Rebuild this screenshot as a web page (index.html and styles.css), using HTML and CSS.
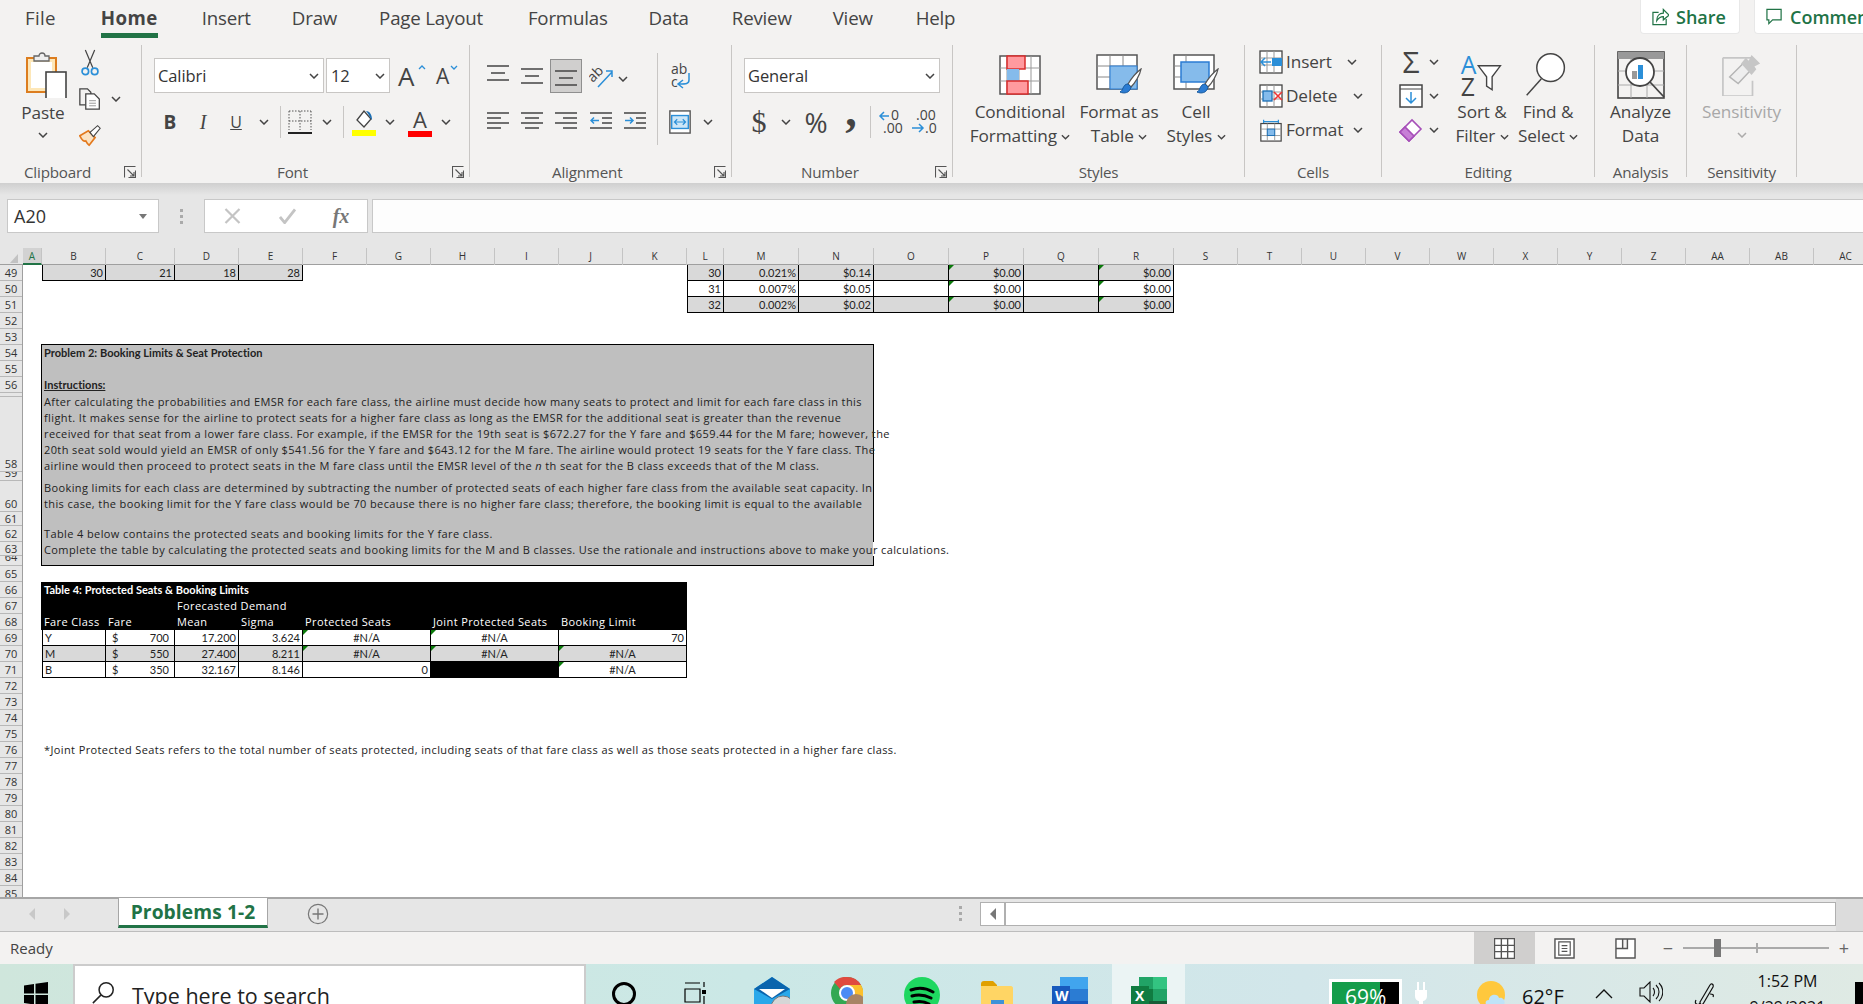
FILE: index.html
```html
<!DOCTYPE html>
<html lang="en">
<head>
<meta charset="utf-8">
<title>Problems 1-2 - Excel</title>
<link rel="stylesheet" href="styles.css">
</head>
<body>
<svg class="defs" width="0" height="0" aria-hidden="true">
  <symbol id="chev" viewBox="0 0 10 6"><path d="M1 1l4 4 4-4" fill="none" stroke="#444" stroke-width="1.5"/></symbol>
  <symbol id="launch" viewBox="0 0 12 12"><path d="M.5 11.500V.5h11M11.500 4.500v7h-7M3.500 3.500l6.500 6.500M10 6v4H6" fill="none" stroke="#555" stroke-width="1.100"/></symbol>
  <symbol id="brush" viewBox="0 0 22 26"><path d="M21 1C17 4 11 11 8 16l3 3C15 15 20 7 21 1z" fill="#fff" stroke="#555" stroke-width="1.300"/><path d="M8 16c-3 0-4 2-5 4-.6 2-1.500 3-3 4 4 2 10 1 11-5z" fill="#2b7cd3" stroke="#185a9d"/></symbol>
</svg>
<div class="app">
  <header class="ribbon">
    <div class="tabline">
      <nav class="tabs">
        <span class="tab">File</span>
        <span class="tab tab-on">Home</span>
        <span class="tab">Insert</span>
        <span class="tab">Draw</span>
        <span class="tab">Page Layout</span>
        <span class="tab">Formulas</span>
        <span class="tab">Data</span>
        <span class="tab">Review</span>
        <span class="tab">View</span>
        <span class="tab">Help</span>
      </nav>
      <div class="collab">
        <span class="collab-btn share-btn">
          <svg class="collab-ico" viewBox="0 0 18 20"><path d="M7 5H1v13h14v-6M5 14c0-5 3-8 7-8V2l6 6-6 5V9.500c-3 0-5 1-7 4.500z" fill="none" stroke="#217346" stroke-width="1.300"/></svg>Share</span>
        <span class="collab-btn comment-btn">
          <svg class="collab-ico" viewBox="0 0 18 20"><path d="M1 2h15v11H7l-4 4v-4H1z" fill="none" stroke="#217346" stroke-width="1.300"/></svg>Comments</span>
      </div>
    </div>
    <div class="groups">
      <section class="group g-clip">
        <div class="clip-body">
          <div class="paste">
            <svg class="paste-ico" viewBox="0 0 41 46"><rect x="1" y="6" width="29" height="34" fill="#fde7b8" stroke="#dc7d1f" stroke-width="2"/><rect x="5" y="10" width="21" height="26" fill="#fff"/><path d="M8 9V4h5c0-4 6-4 6 0h4v5z" fill="#eee" stroke="#666" stroke-width="1.300"/><rect x="20" y="20" width="20" height="31" fill="#fff" stroke="#444" stroke-width="1.600"/></svg>
            <span class="big-text">Paste</span>
            <svg class="chev"><use href="#chev"/></svg>
          </div>
          <svg class="clip-ico" viewBox="0 0 20 30"><path d="M5 1l8 19M15 1L7 20" stroke="#444" fill="none" stroke-width="1.300"/><circle cx="5" cy="24" r="3.500" fill="none" stroke="#2b8fd8" stroke-width="1.800"/><circle cx="15" cy="24" r="3.500" fill="none" stroke="#2b8fd8" stroke-width="1.800"/></svg>
          <span></span>
          <svg class="clip-ico" viewBox="0 0 26 26"><path d="M8 20H1V1h9l4 4v3" fill="none" stroke="#444" stroke-width="1.500"/><path d="M8 7h10l6 6v12H8z" fill="#fff" stroke="#444" stroke-width="1.500"/><path d="M12 15h8M12 18h8M12 21h8" stroke="#888"/></svg>
          <svg class="chev"><use href="#chev"/></svg>
          <svg class="clip-ico" viewBox="0 0 26 26"><path d="M1 14l10-6 8 8-7 9c-2-1-3-3-4-5-2 1-4 0-7-6z" fill="#fbe3c4" stroke="#e3791d" stroke-width="2"/><path d="M13 10l9-8 3 3-8 10z" fill="#fff" stroke="#444" stroke-width="1.300"/></svg>
          <span></span>
        </div>
        <div class="group-label lb-clip"><span>Clipboard</span><svg class="launch"><use href="#launch"/></svg></div>
      </section>

      <section class="group g-font">
        <div class="stack">
          <div class="font-row1">
            <div class="combo combo-font"><span>Calibri</span><svg class="chev"><use href="#chev"/></svg></div>
            <div class="combo combo-size"><span>12</span><svg class="chev"><use href="#chev"/></svg></div>
            <span class="grow-a big-a">A<svg class="caret" viewBox="0 0 8 5"><path d="M1 4l3-3 3 3" fill="none" stroke="#2b8fd8" stroke-width="1.300"/></svg></span>
            <span class="grow-a small-a">A<svg class="caret" viewBox="0 0 8 5"><path d="M1 1l3 3 3-3" fill="none" stroke="#2b8fd8" stroke-width="1.300"/></svg></span>
          </div>
          <div class="font-row2">
            <b class="fmt">B</b>
            <i class="fmt fmt-i">I</i>
            <u class="fmt fmt-u">U</u>
            <svg class="chev"><use href="#chev"/></svg>
            <span class="vsep"></span>
            <svg class="ico24" viewBox="0 0 24 24"><path d="M1 1h22M1 1v19M23 1v19M12 1v19M1 11h22" stroke="#555" stroke-dasharray="1.500 1.500" fill="none"/><path d="M0 23h24" stroke="#222" stroke-width="2"/></svg>
            <svg class="chev"><use href="#chev"/></svg>
            <span class="vsep"></span>
            <svg class="ico-col" viewBox="0 0 24 28"><path d="M5 12l7-9 7 8-7 8z" fill="#fff" stroke="#444" stroke-width="1.300"/><path d="M14 3c4 0 6 4 6 9-2-2-3-6-6-9z" fill="#1b6fb5"/><rect y="22" width="24" height="6" fill="#ff0"/></svg>
            <svg class="chev"><use href="#chev"/></svg>
            <span class="font-col">A</span>
            <svg class="chev"><use href="#chev"/></svg>
          </div>
        </div>
        <div class="group-label lb-font"><span>Font</span><svg class="launch"><use href="#launch"/></svg></div>
      </section>

      <section class="group g-align">
        <div class="align-body">
          <svg class="lines" viewBox="0 0 22 22"><path d="M0 1h22M4 8h14M0 15h22" stroke="#444" stroke-width="1.500"/></svg>
          <svg class="lines" viewBox="0 0 22 22"><path d="M0 4h22M4 11h14M0 18h22" stroke="#444" stroke-width="1.500"/></svg>
          <span class="align-on"><svg class="lines" viewBox="0 0 22 22"><path d="M0 6h22M4 13h14M0 20h22" stroke="#444" stroke-width="1.500"/></svg></span>
          <svg class="ico24" viewBox="0 0 24 24"><text x="0" y="14" class="svg-t" transform="rotate(-45 8 12)">ab</text><path d="M9 23L23 8M17 7h6v6" stroke="#2b8fd8" stroke-width="1.500" fill="none"/></svg>
          <svg class="chev chev-start"><use href="#chev"/></svg>
          <span class="vsep vsep-tall"></span>
          <svg class="ico24 wrap-ico" viewBox="0 0 24 28"><text x="3" y="12" class="svg-t">ab</text><text x="3" y="25" class="svg-t">c</text><path d="M21 11v7c0 4-3 4-10 4M15 18l-5 4 5 4" stroke="#2b8fd8" stroke-width="1.500" fill="none"/></svg>
          <span></span>
          <svg class="lines" viewBox="0 0 22 22"><path d="M0 2h22M0 7h14M0 12h22M0 17h14" stroke="#444" stroke-width="1.500"/></svg>
          <svg class="lines" viewBox="0 0 22 22"><path d="M0 2h22M4 7h14M0 12h22M4 17h14" stroke="#444" stroke-width="1.500"/></svg>
          <svg class="lines" viewBox="0 0 22 22"><path d="M0 2h22M8 7h14M0 12h22M8 17h14" stroke="#444" stroke-width="1.500"/></svg>
          <svg class="lines" viewBox="0 0 22 22"><path d="M0 2h22M12 7h10M12 12h10M0 17h22" stroke="#444" stroke-width="1.500"/><path d="M9 9.500H1M4 6.500l-3 3 3 3" stroke="#2b8fd8" stroke-width="1.500" fill="none"/></svg>
          <svg class="lines" viewBox="0 0 22 22"><path d="M0 2h22M12 7h10M12 12h10M0 17h22" stroke="#444" stroke-width="1.500"/><path d="M1 9.500h8M6 6.500l3 3-3 3" stroke="#2b8fd8" stroke-width="1.500" fill="none"/></svg>
          <svg class="ico24" viewBox="0 0 24 26"><rect x="1" y="1" width="22" height="24" fill="#fff" stroke="#555" stroke-width="1.500"/><rect x="3" y="6" width="18" height="14" fill="#cde6f7" stroke="#2b8fd8" stroke-width="1.500"/><path d="M6 13h12M9 10l-3 3 3 3M15 10l3 3-3 3" stroke="#2b8fd8" stroke-width="1.300" fill="none"/></svg>
          <svg class="chev"><use href="#chev"/></svg>
        </div>
        <div class="group-label lb-align"><span>Alignment</span><svg class="launch"><use href="#launch"/></svg></div>
      </section>

      <section class="group g-num">
        <div class="stack">
          <div class="combo combo-num"><span>General</span><svg class="chev"><use href="#chev"/></svg></div>
          <div class="num-row2">
            <span class="num-t num-d">$</span>
            <svg class="chev"><use href="#chev"/></svg>
            <span class="num-t num-p">%</span>
            <b class="num-t num-c">,</b>
            <span class="vsep"></span>
            <svg class="ico-dec" viewBox="0 0 26 26"><text x="13" y="11" class="svg-d">0</text><text x="5" y="24" class="svg-d">.00</text><path d="M11 7H2M6 3L2 7l4 4" stroke="#2b8fd8" stroke-width="1.500" fill="none"/></svg>
            <svg class="ico-dec" viewBox="0 0 26 26"><text x="5" y="11" class="svg-d">.00</text><text x="14" y="24" class="svg-d">.0</text><path d="M1 19h11M8 15l4 4-4 4" stroke="#2b8fd8" stroke-width="1.500" fill="none"/></svg>
          </div>
        </div>
        <div class="group-label lb-num"><span>Number</span><svg class="launch"><use href="#launch"/></svg></div>
      </section>

      <section class="group g-styles">
        <div class="styles-body">
          <div class="big">
            <div class="big-ico"><svg class="ico42" viewBox="0 0 42 40"><rect x="1" y="1" width="40" height="38" fill="#fff" stroke="#555" stroke-width="1.500"/><path d="M1 13h40M1 26h40M8 1v38M20 1v38M32 1v38" stroke="#999"/><rect x="8" y="1" width="18" height="13" fill="#ff9a9f" stroke="#d92b2b" stroke-width="1.500"/><rect x="8" y="14" width="12" height="12" fill="#85bbeb"/><rect x="8" y="26" width="21" height="13" fill="#ff9a9f" stroke="#d92b2b" stroke-width="1.500"/></svg></div>
            <span class="big-text">Conditional</span>
            <span class="big-text">Formatting <svg class="chev chev-in"><use href="#chev"/></svg></span>
          </div>
          <div class="big">
            <div class="big-ico"><svg class="ico46" viewBox="0 0 46 42"><rect x="1" y="1" width="40" height="34" fill="#fff" stroke="#555" stroke-width="1.500"/><path d="M14 1v34M27 1v34M1 12h40M1 23h40" stroke="#888"/><rect x="14" y="12" width="27" height="23" fill="#85bbeb" stroke="#2b7cd3"/><use href="#brush" x="24" y="14" width="22" height="26"/></svg></div>
            <span class="big-text">Format as</span>
            <span class="big-text">Table <svg class="chev chev-in"><use href="#chev"/></svg></span>
          </div>
          <div class="big">
            <div class="big-ico"><svg class="ico46" viewBox="0 0 46 42"><rect x="1" y="1" width="40" height="34" fill="#fff" stroke="#555" stroke-width="1.500"/><path d="M1 12h12M1 23h12M13 1v34" stroke="#888"/><rect x="8" y="8" width="28" height="20" fill="#85bbeb" stroke="#2b7cd3" stroke-width="1.500"/><use href="#brush" x="24" y="14" width="22" height="26"/></svg></div>
            <span class="big-text">Cell</span>
            <span class="big-text">Styles <svg class="chev chev-in"><use href="#chev"/></svg></span>
          </div>
        </div>
        <div class="group-label"><span>Styles</span></div>
      </section>

      <section class="group g-cells">
        <div class="cells-body">
          <div class="cell-row"><svg class="ico24" viewBox="0 0 24 24"><rect x="1" y="1" width="22" height="22" fill="#fff" stroke="#444" stroke-width="1.300"/><path d="M8 1v22M15 1v22M1 8h22M1 15h22" stroke="#999"/><rect x="13" y="8" width="10" height="8" fill="#2b8fd8"/><path d="M12 12H2M6 8l-4 4 4 4" stroke="#2b8fd8" stroke-width="1.500" fill="none"/></svg><span class="big-text">Insert</span><svg class="chev m-ins"><use href="#chev"/></svg></div>
          <div class="cell-row"><svg class="ico24" viewBox="0 0 24 24"><rect x="1" y="1" width="22" height="22" fill="#fff" stroke="#444" stroke-width="1.300"/><path d="M8 1v22M15 1v22M1 8h22M1 15h22" stroke="#999"/><rect x="4" y="7" width="9" height="10" fill="#85bbeb" stroke="#1b6fb5" stroke-width="1.300"/><path d="M15 8l8 8M23 8l-8 8" stroke="#e33" stroke-width="1.600"/></svg><span class="big-text">Delete</span><svg class="chev m-del"><use href="#chev"/></svg></div>
          <div class="cell-row"><svg class="ico24" viewBox="0 0 24 26"><path d="M4 2v4M20 2v4M4 4h16" stroke="#2b8fd8" stroke-width="1.300"/><rect x="1" y="6" width="22" height="19" fill="#fff" stroke="#444" stroke-width="1.300"/><path d="M8 6v19M16 6v19M1 12h22M1 19h22" stroke="#999"/><rect x="8" y="12" width="8" height="7" fill="#85bbeb" stroke="#1b6fb5"/></svg><span class="big-text">Format</span><svg class="chev m-fmt"><use href="#chev"/></svg></div>
        </div>
        <div class="group-label"><span>Cells</span></div>
      </section>

      <section class="group g-edit">
        <div class="edit-body">
          <div class="edit-small">
            <span class="edit-row"><span class="sigma">Σ</span><svg class="chev"><use href="#chev"/></svg></span>
            <span class="edit-row"><svg class="ico24" viewBox="0 0 24 24"><rect x="1" y="1" width="22" height="22" fill="#fff" stroke="#444" stroke-width="1.500"/><path d="M1 5h22" stroke="#444"/><path d="M12 8v11M7 14l5 5 5-5" stroke="#2b8fd8" stroke-width="1.500" fill="none"/></svg><svg class="chev"><use href="#chev"/></svg></span>
            <span class="edit-row"><svg class="ico24" viewBox="0 0 24 24"><path d="M1 14L13 2l9 9-12 12z" fill="#fff" stroke="#a64fb8" stroke-width="1.600"/><path d="M1 14l5-5 9 9-5 5z" fill="#c77fd6" stroke="#a64fb8" stroke-width="1.600"/></svg><svg class="chev"><use href="#chev"/></svg></span>
          </div>
          <div class="big">
            <div class="big-ico"><svg class="ico46" viewBox="0 0 46 50"><text x="0" y="24" class="svg-az svg-blue">A</text><text x="0" y="48" class="svg-az">Z</text><path d="M19 15h24L34 27v14l-6-4V27z" fill="#fff" stroke="#444" stroke-width="1.500"/></svg></div>
            <span class="big-text">Sort &amp;</span>
            <span class="big-text">Filter <svg class="chev chev-in"><use href="#chev"/></svg></span>
          </div>
          <div class="big">
            <div class="big-ico"><svg class="ico46 find-ico" viewBox="0 0 46 50"><circle cx="28" cy="17" r="15" fill="#fff" stroke="#444" stroke-width="1.600"/><path d="M18 29L2 47" stroke="#444" stroke-width="1.600"/></svg></div>
            <span class="big-text">Find &amp;</span>
            <span class="big-text">Select <svg class="chev chev-in"><use href="#chev"/></svg></span>
          </div>
        </div>
        <div class="group-label"><span>Editing</span></div>
      </section>

      <section class="group g-an">
        <div class="big big-one">
          <div class="big-ico"><svg class="ico48" viewBox="0 0 48 48"><rect x="1" y="1" width="46" height="46" fill="#f3f2f1" stroke="#444" stroke-width="1.600"/><rect x="1" y="1" width="46" height="7" fill="#999"/><path d="M1 20h46M1 34h46M14 8v39M30 8v39" stroke="#aaa"/><circle cx="23" cy="21" r="14" fill="#fff" stroke="#444" stroke-width="1.800"/><rect x="15" y="20" width="5" height="8" fill="#999"/><rect x="21" y="14" width="5" height="14" fill="#2b8fd8"/><path d="M33 31l14 15" stroke="#444" stroke-width="1.800"/></svg></div>
          <span class="big-text">Analyze</span>
          <span class="big-text">Data</span>
        </div>
        <div class="group-label"><span>Analysis</span></div>
      </section>

      <section class="group g-sens">
        <div class="big big-one">
          <div class="big-ico"><svg class="ico42" viewBox="0 0 42 44"><path d="M1 4h31M1 4v40h31V28" fill="none" stroke="#c6c6c6" stroke-width="1.800"/><path d="M8 24L24 8l8 7-15 16z" fill="#eee" stroke="#b5b5b5" stroke-width="1.500"/><path d="M20 10l5-6 3 3 3-6 9 9-6 3 2 3-5 6z" fill="#c6c6c6"/></svg></div>
          <span class="big-text dim">Sensitivity</span>
          <svg class="chev chev-dim"><use href="#chev"/></svg>
        </div>
        <div class="group-label"><span>Sensitivity</span></div>
      </section>
    </div>
  </header>

  <div class="fbar">
    <div class="namebox"><span>A20</span><svg class="tri" viewBox="0 0 8 5"><path d="M0 0h8L4 5z" fill="#777"/></svg></div>
    <div class="fdots"><i></i><i></i><i></i></div>
    <div class="fbtns">
      <svg class="fico" viewBox="0 0 16 16"><path d="M1 1l14 14M15 1L1 15" stroke="#c4c4c4" stroke-width="2.200"/></svg>
      <svg class="fico" viewBox="0 0 18 16"><path d="M1 9l5 6L17 1" fill="none" stroke="#c4c4c4" stroke-width="3"/></svg>
      <span class="fx">fx</span>
    </div>
    <div class="finput"></div>
  </div>

  <main class="sheet">
    <div class="colhead">
      <span class="corner"><svg class="corner-tri" viewBox="0 0 8 9"><path d="M8 0v9H0z" fill="#c2c2c2"/></svg></span>
      <span class="ch ch-on">A</span><span class="ch">B</span><span class="ch">C</span><span class="ch">D</span><span class="ch">E</span><span class="ch">F</span><span class="ch">G</span><span class="ch">H</span><span class="ch">I</span><span class="ch">J</span><span class="ch">K</span><span class="ch">L</span><span class="ch">M</span><span class="ch">N</span><span class="ch">O</span><span class="ch">P</span><span class="ch">Q</span><span class="ch">R</span><span class="ch">S</span><span class="ch">T</span><span class="ch">U</span><span class="ch">V</span><span class="ch">W</span><span class="ch">X</span><span class="ch">Y</span><span class="ch">Z</span><span class="ch">AA</span><span class="ch">AB</span><span class="ch">AC</span>
    </div>
    <div class="sheet-body">
      <div class="rowhead">
        <span class="rh">49</span><span class="rh">50</span><span class="rh">51</span><span class="rh">52</span><span class="rh">53</span><span class="rh">54</span><span class="rh">55</span><span class="rh">56</span>
        <span class="rh rh-57"></span>
        <span class="rh rh-58">58</span>
        <span class="rh rh-59">59</span>
        <span class="rh rh-60">60</span>
        <span class="rh rh-14">61</span>
        <span class="rh">62</span>
        <span class="rh rh-14">63</span>
        <span class="rh rh-64">64</span>
        <span class="rh">65</span><span class="rh">66</span><span class="rh">67</span><span class="rh">68</span><span class="rh">69</span><span class="rh">70</span><span class="rh">71</span><span class="rh">72</span><span class="rh">73</span><span class="rh">74</span><span class="rh">75</span><span class="rh">76</span><span class="rh">77</span><span class="rh">78</span><span class="rh">79</span><span class="rh">80</span><span class="rh">81</span><span class="rh">82</span><span class="rh">83</span><span class="rh">84</span><span class="rh">85</span>
      </div>
      <div class="cells">
        <div class="c cB r49 grey lb">30</div><div class="c cC r49 grey">21</div><div class="c cD r49 grey">18</div><div class="c cE r49 grey">28</div>
        <div class="c cL r49 grey lb">30</div><div class="c cM r49 grey">0.021%</div><div class="c cN r49 grey">$0.14</div><div class="c cO r49 grey"></div><div class="c cP r49 grey flag">$0.00</div><div class="c cQ r49 grey"></div><div class="c cR r49 grey flag">$0.00</div>
        <div class="c cL r50 lb">31</div><div class="c cM r50">0.007%</div><div class="c cN r50">$0.05</div><div class="c cO r50"></div><div class="c cP r50 flag">$0.00</div><div class="c cQ r50"></div><div class="c cR r50 flag">$0.00</div>
        <div class="c cL r51 grey lb">32</div><div class="c cM r51 grey">0.002%</div><div class="c cN r51 grey">$0.02</div><div class="c cO r51 grey"></div><div class="c cP r51 grey flag">$0.00</div><div class="c cQ r51 grey"></div><div class="c cR r51 grey flag">$0.00</div>

        <div class="probbox"></div>
        <div class="t t-bold r54 cB">Problem 2: Booking Limits &amp; Seat Protection</div>
        <div class="t t-bold t-u r56 cB">Instructions:</div>
        <div class="t para p1">After calculating the probabilities and EMSR for each fare class, the airline must decide how many seats to protect and limit for each fare class in this<br>flight. It makes sense for the airline to protect seats for a higher fare class as long as the EMSR for the additional seat is greater than the revenue<br>received for that seat from a lower fare class. For example, if the EMSR for the 19th seat is $672.27 for the Y fare and $659.44 for the M fare; however, the<br>20th seat sold would yield an EMSR of only $541.56 for the Y fare and $643.12 for the M fare. The airline would protect 19 seats for the Y fare class. The<br>airline would then proceed to protect seats in the M fare class until the EMSR level of the <i>n</i> th seat for the B class exceeds that of the M class.</div>
        <div class="t para p2">Booking limits for each class are determined by subtracting the number of protected seats of each higher fare class from the available seat capacity. In<br>this case, the booking limit for the Y fare class would be 70 because there is no higher fare class; therefore, the booking limit is equal to the available</div>
        <div class="t para r62 cB">Table 4 below contains the protected seats and booking limits for the Y fare class.</div>
        <div class="gapmark"></div>
        <div class="t para r63 cB">Complete the table by calculating the protected seats and booking limits for the M and B classes. Use the rationale and instructions above to make your calculations.</div>

        <div class="t4head"></div>
        <div class="t t-bold t-w r66 cB">Table 4: Protected Seats &amp; Booking Limits</div>
        <div class="t para t-w r67 cD">Forecasted Demand</div>
        <div class="t para t-w r68 cB">Fare Class</div><div class="t para t-w r68 cC">Fare</div><div class="t para t-w r68 cD">Mean</div><div class="t para t-w r68 cE">Sigma</div><div class="t para t-w r68 cF">Protected Seats</div><div class="t para t-w r68 cH">Joint Protected Seats</div><div class="t para t-w r68 cJ">Booking Limit</div>

        <div class="c al r69 cB lb">Y</div><div class="c money r69 cC"><span>$</span><span>700</span></div><div class="c r69 cD">17.200</div><div class="c r69 cE">3.624</div><div class="c ctr r69 cFG flag">#N/A</div><div class="c ctr r69 cHI flag">#N/A</div><div class="c r69 cJK">70</div>
        <div class="c al r70 cB lb grey">M</div><div class="c money r70 cC grey"><span>$</span><span>550</span></div><div class="c r70 cD grey">27.400</div><div class="c r70 cE grey">8.211</div><div class="c ctr r70 cFG grey flag">#N/A</div><div class="c ctr r70 cHI grey flag">#N/A</div><div class="c ctr r70 cJK grey flag">#N/A</div>
        <div class="c al r71 cB lb">B</div><div class="c money r71 cC"><span>$</span><span>350</span></div><div class="c r71 cD">32.167</div><div class="c r71 cE">8.146</div><div class="c r71 cFG">0</div><div class="c r71 cHI blk"></div><div class="c ctr r71 cJK flag">#N/A</div>

        <div class="t para r76 cB">*Joint Protected Seats refers to the total number of seats protected, including seats of that fare class as well as those seats protected in a higher fare class.</div>
      </div>
    </div>
  </main>

  <div class="sheetbar">
    <div class="sheetnav">
      <svg class="navtri" viewBox="0 0 6 12"><path d="M6 0v12L0 6z" fill="#c8c8c8"/></svg>
      <svg class="navtri" viewBox="0 0 6 12"><path d="M0 0v12l6-6z" fill="#c8c8c8"/></svg>
    </div>
    <div class="sheettab">Problems 1-2</div>
    <svg class="addsheet" viewBox="0 0 24 24"><circle cx="12" cy="12" r="10.500" fill="none" stroke="#777" stroke-width="1.300"/><path d="M12 6v12M6 12h12" stroke="#777" stroke-width="1.500"/></svg>
    <div class="vdots"><i></i><i></i><i></i></div>
    <div class="hscroll"><span class="hs-btn"><svg class="hs-tri" viewBox="0 0 6 12"><path d="M6 0v12L0 6z" fill="#777"/></svg></span></div>
    <div class="hs-end"></div>
  </div>

  <div class="status">
    <span class="ready">Ready</span>
    <div class="views">
      <span class="view view-on"><svg class="view-ico" viewBox="0 0 20 20"><path d="M0 0h20v20H0z" fill="#fff"/><path d="M.5.500h19v19H.5zM7 0v20M13 0v20M0 7h20M0 13h20" fill="none" stroke="#555" stroke-width="1.300"/></svg></span>
      <span class="view"><svg class="view-ico" viewBox="0 0 22 22"><path d="M1 1h20v20H1z" fill="#fff" stroke="#555" stroke-width="1.500"/><path d="M5 4h12v14H5zM8 8h6M8 11h6M8 14h6" fill="none" stroke="#555" stroke-width="1.200"/></svg></span>
      <span class="view"><svg class="view-ico" viewBox="0 0 22 22"><path d="M1 1h20v20H1zM8 1v10h5V1M1 11h7" fill="#fff" stroke="#555" stroke-width="1.500"/></svg></span>
    </div>
    <div class="zoom">
      <span class="zoom-btn">−</span>
      <div class="zoom-track"><span class="zoom-thumb"></span><span class="zoom-tick"></span></div>
      <span class="zoom-btn">+</span>
    </div>
  </div>

  <footer class="taskbar">
    <div class="tb-start"><svg class="win" viewBox="0 0 24 24"><path d="M0 3.500l10-1.500v9.500H0zM11.500 1.800L24 0v11.500H11.500zM0 13h10v9.500L0 21zM11.500 13H24v11l-12.500-1.800z" fill="#000"/></svg></div>
    <div class="tb-search"><svg class="tb-mag" viewBox="0 0 26 26"><circle cx="16" cy="10" r="8" fill="none" stroke="#222" stroke-width="1.700"/><path d="M10 16L1 25" stroke="#222" stroke-width="1.700"/></svg><span>Type here to search</span></div>
    <span class="tb-item w-cort"><span class="cortana"></span></span>
    <span class="tb-item w-task"><svg class="tb-task" viewBox="0 0 22 30"><path d="M1 1h15M1 7h15v13H1zM20 0v5M20 14v12" stroke="#000" fill="none" stroke-width="1.200"/><rect x="18" y="8" width="4" height="4" fill="#000"/></svg></span>
    <span class="tb-item w-mail"><svg class="tb-ico" viewBox="0 0 36 36"><path d="M0 12L18 0l18 12v24H0z" fill="#29a8ea"/><path d="M0 12L18 0l18 12-18 10z" fill="#0a64ad"/><path d="M5 12h26l-13 9z" fill="#fff"/><circle cx="29" cy="31" r="12" fill="#d6d6d6" stroke="#777"/><text x="23" y="37" class="svg-badge">53</text></svg></span>
    <span class="tb-item w-chrome"><svg class="tb-ico tb-32" viewBox="0 0 32 32"><circle cx="16" cy="16" r="16" fill="#34a853"/><path d="M16 0a16 16 0 0 1 14 8H16a8 8 0 0 0-7 4L3 5A16 16 0 0 1 16 0z" fill="#e04a3f"/><path d="M30 8a16 16 0 0 1 0 16l-8-2-6-14z" fill="#fbc02d"/><circle cx="16" cy="16" r="7" fill="#4c8bf5" stroke="#fff" stroke-width="2"/><circle cx="25" cy="27" r="10" fill="#a88465"/></svg></span>
    <span class="tb-item w-spot"><svg class="tb-ico" viewBox="0 0 36 36"><circle cx="18" cy="18" r="18" fill="#1ed760"/><path d="M7 13c8-3 15-2 22 2M8 19c7-2 13-1 19 2M10 25c5-1 10-1 15 2" fill="none" stroke="#000" stroke-width="3" stroke-linecap="round"/></svg></span>
    <span class="tb-item w-folder"><svg class="tb-ico tb-32 tb-folder" viewBox="0 0 32 32"><path d="M0 3c0-2 1-3 3-3h9l4 4v4H0z" fill="#e0a000"/><path d="M0 5h30c1 0 2 1 2 2v25H0z" fill="#ffd564"/><rect x="10" y="19" width="13" height="13" fill="#3e92d8"/><rect x="14" y="23" width="5" height="9" fill="#ffd564"/></svg></span>
    <span class="tb-item w-word"><svg class="tb-ico" viewBox="0 0 36 36"><rect x="8" y="0" width="28" height="12" fill="#41a5ee"/><rect x="8" y="12" width="28" height="12" fill="#2b7cd3"/><rect x="8" y="24" width="28" height="12" fill="#185abd"/><rect x="0" y="9" width="18" height="18" fill="#185abd"/><text x="3" y="24" class="svg-app">W</text></svg></span>
    <span class="tb-item w-excel"><svg class="tb-ico" viewBox="0 0 36 36"><rect x="8" y="0" width="14" height="12" fill="#21a366"/><rect x="22" y="0" width="14" height="12" fill="#33c481"/><rect x="8" y="12" width="14" height="12" fill="#107c41"/><rect x="22" y="12" width="14" height="12" fill="#21a366"/><rect x="8" y="24" width="28" height="12" fill="#185c37"/><rect x="0" y="9" width="18" height="18" fill="#107c41"/><text x="4" y="24" class="svg-app">X</text></svg></span>
    <span class="tb-fill"></span>
    <div class="battery"><span class="batt-green">69%</span><span class="batt-black"></span></div>
    <svg class="plug" viewBox="0 0 14 24"><path d="M4 0v8M10 0v8" stroke="#fff" stroke-width="2"/><path d="M1 8h12v6c0 4-3 5-4 5v5H5v-5c-1 0-4-1-4-5z" fill="#fff"/></svg>
    <svg class="sun" viewBox="0 0 30 30"><circle cx="14" cy="15" r="14" fill="#ffc83d"/><path d="M12 26c-4 0-5-6 0-6 0-6 9-7 10-2 6-2 8 8 2 8z" fill="#bfe3f7"/></svg>
    <span class="tb-temp">62°F</span>
    <svg class="tb-chev" viewBox="0 0 18 10"><path d="M1 9l8-8 8 8" fill="none" stroke="#111" stroke-width="1.300"/></svg>
    <svg class="tb-vol" viewBox="0 0 24 22"><path d="M1 7h4l6-6v20l-6-6H1zM14 7c2 2 2 6 0 8M17 4c4 4 4 10 0 14M20 2c5 5 5 13 0 18" fill="none" stroke="#111" stroke-width="1.100"/></svg>
    <svg class="tb-pen" viewBox="0 0 22 24"><path d="M6 20L16 3c1-2 4-1 3 2L9 22c-1 1-3 1-3-2zM2 18c-2 4 2 6 4 3M16 12c3 0 4 1 3 3" fill="none" stroke="#111" stroke-width="1.200"/></svg>
    <div class="clock"><span>1:52 PM</span><span>9/29/2021</span></div>
    <span class="tb-notif"></span>
  </footer>
</div>
</body>
</html>
```
FILE: styles.css
```css
* { box-sizing: border-box; }
html, body { margin: 0; padding: 0; height: 100%; overflow: hidden; }
body { font-family: "Open Sans", "Liberation Sans", sans-serif; color: #444; background: #fff; }
.defs { position: absolute; }
.app { width: 1863px; height: 1004px; display: flex; flex-direction: column; overflow: hidden; }
svg { display: block; flex: none; }

/* ribbon */
.ribbon { height: 183px; background: #f3f2f1; flex: none; }
.tabline { height: 45px; display: flex; justify-content: space-between; }
.tabs { display: flex; gap: 43px; padding-left: 25px; }
.tab { font-size: 18.700px; line-height: 35px; height: 38px; color: #444; letter-spacing: -.2px; white-space: nowrap; }
.tab:nth-child(1) { letter-spacing: .3px; }
.tab:nth-child(2) { margin-left: 2px; }
.tab:nth-child(3) { margin-left: 1px; }
.tab:nth-child(4) { margin-left: -2px; }
.tab:nth-child(5) { margin-left: -1px; }
.tab:nth-child(6) { margin-left: 2px; }
.tab:nth-child(7) { margin-left: -2px; }
.tab:nth-child(9) { margin-left: -2px; }
.tab-on { font-weight: 700; letter-spacing: .4px; border-bottom: 5px solid #217346; }
.collab { display: flex; gap: 14px; width: 223px; overflow: hidden; flex: none; }
.collab-btn { background: #fff; height: 34px; border: 1px solid #e8e8e8; border-top: 0; border-radius: 0 0 4px 4px; display: flex; align-items: center; gap: 7px; color: #217346; font-weight: 600; font-size: 18px; flex: none; }
.share-btn { width: 100px; padding-left: 11px; }
.comment-btn { width: 130px; padding-left: 11px; }
.collab-ico { width: 17px; height: 20px; }
.groups { display: flex; height: 132px; }
.group { display: flex; flex-direction: column; border-right: 1px solid #c8c6c4; flex: none; }
.group > :first-child { flex: 1; min-height: 0; }
.group-label { height: 20px; margin-bottom: -5px; flex: none !important; font-size: 15.200px; line-height: 18px; color: #555; display: flex; justify-content: center; align-items: center; white-space: nowrap; letter-spacing: -.2px; }
.launch { width: 12px; height: 12px; }
.lb-clip, .lb-font, .lb-align, .lb-num { justify-content: space-between; }
.lb-clip { padding: 0 5px 0 24px; }
.lb-font { padding: 0 5px 0 135px; }
.lb-align { padding: 0 5px 0 82px; }
.lb-num { padding: 0 5px 0 69px; }
.g-clip { width: 142px; }
.g-font { width: 328px; }
.g-align { width: 262px; }
.g-num { width: 221px; }
.g-styles { width: 292px; }
.g-cells { width: 137px; }
.g-edit { width: 213px; }
.g-an { width: 92px; }
.g-sens { width: 110px; }
.chev { width: 10px; height: 6px; }
.chev-in { display: inline-block; width: 9px; margin-left: 0; vertical-align: 2px; }
.chev-start { justify-self: start; margin-top: 6px; }
.chev-dim { opacity: .4; margin-top: 8px; }
.big-text { font-size: 17.200px; line-height: 24px; white-space: nowrap; letter-spacing: -.1px; color: #444; }
.dim { color: #a8a8a8; }

.clip-body { display: grid; grid-template-columns: 66px 28px 24px; grid-template-rows: 36px 36px 36px; padding-left: 10px; place-items: center; }
.paste { grid-row: 1 / 4; display: flex; flex-direction: column; align-items: center; align-self: start; padding-top: 7px; }
.paste-ico { width: 41px; height: 46px; margin-left: 6px; }
.paste .big-text { margin-top: 4px; line-height: 22px; }
.paste .chev { margin-top: 8px; }
.clip-ico { width: 22px; height: 28px; }

.stack { padding: 13px 0 0 12px; display: flex; flex-direction: column; gap: 12px; }
.combo { height: 35px; background: #fff; border: 1px solid #c8c6c4; display: flex; align-items: center; justify-content: space-between; padding: 0 4px 0 3px; font-size: 16.500px; color: #333; letter-spacing: -.1px; }
.font-row1 { display: flex; align-items: center; gap: 2px; }
.combo-font { width: 170px; }
.combo-size { width: 64px; padding-left: 4px; }
.combo-num { width: 196px; }
.grow-a { position: relative; display: block; color: #444; line-height: 30px; }
.big-a { font-size: 26px; margin-left: 6px; width: 36px; }
.small-a { font-size: 21px; width: 30px; }
.caret { position: absolute; width: 8px; height: 5px; top: 4px; right: 8px; }
.font-row2 { display: grid; grid-template-columns: 32px 34px 32px 24px 8px 32px 22px 10px 32px 20px 40px 12px; place-items: center; height: 34px; }
.fmt { font-size: 19px; color: #444; font-family: "Open Sans", sans-serif; }
.fmt-i { font-family: "Liberation Serif", serif; font-size: 20px; }
.fmt-u { font-size: 16px; }
.vsep { width: 1px; height: 32px; background: #c8c6c4; display: block; }
.vsep-tall { grid-column: 6; grid-row: 1 / 3; height: 92px; }
.ico24 { width: 24px; height: 24px; }
.ico-col { width: 24px; height: 28px; }
.font-col { font-size: 22px; line-height: 24px; color: #444; border-bottom: 6px solid #f00; width: 24px; text-align: center; height: 30px; }

.align-body { display: grid; grid-template-columns: 34px 34px 34px 35px 34px 10px 36px 20px; grid-template-rows: 35px 34px; row-gap: 12px; padding: 13px 0 0 11px; place-items: center; }
.lines { width: 22px; height: 22px; }
.align-on { width: 32px; height: 34px; background: #d0cfce; border: 1px solid #8f8f8f; display: flex; align-items: center; justify-content: center; }
.wrap-ico { height: 28px; }
.svg-t { font: 14px "Open Sans", sans-serif; fill: #444; }
.svg-d { font: 14px "Open Sans", sans-serif; fill: #444; }
.svg-az { font: 27px "Open Sans", sans-serif; fill: #444; }
.svg-blue { fill: #2b8fd8; }
.svg-badge { font: 13px "Open Sans", sans-serif; fill: #222; }
.svg-app { font: 700 14px "Open Sans", sans-serif; fill: #fff; }

.num-row2 { display: grid; grid-template-columns: 30px 24px 36px 34px 4px 38px 28px; place-items: center; height: 34px; }
.num-t { font-size: 28px; color: #444; line-height: 30px; }
.num-d { font-size: 30px; font-family: "Liberation Serif", serif; }
.num-c { font-size: 46px; line-height: 18px; font-family: "Liberation Serif", serif; margin-top: -22px; }
.ico-dec { width: 26px; height: 26px; }

.styles-body { display: grid; grid-template-columns: 134px 64px 90px; }
.big { display: flex; flex-direction: column; align-items: center; }
.big-ico { height: 55px; display: flex; align-items: center; justify-content: center; flex: none; padding-top: 5px; }
.big-one { align-self: stretch; }
.ico42 { width: 42px; height: 42px; }
.ico46 { width: 46px; height: 46px; }
.ico48 { width: 48px; height: 48px; }
.find-ico { margin-left: -4px; }

.cells-body { display: grid; grid-template-rows: 34px 34px 34px; padding-left: 14px; }
.cell-row { display: flex; align-items: center; gap: 3px; }
.m-ins { margin-left: 12px; }
.m-del { margin-left: 13px; }
.m-fmt { margin-left: 7px; }

.edit-body { display: grid; grid-template-columns: 60px 52px 80px; padding-left: 14px; }
.edit-small { display: grid; grid-template-rows: 34px 34px 34px; }
.edit-row { display: flex; align-items: center; gap: 6px; padding-left: 3px; }
.sigma { width: 24px; font-size: 30px; line-height: 30px; text-align: center; color: #444; }

/* formula bar */
.fbar { height: 65px; flex: none; background: linear-gradient(#cfcfcf, #e6e6e6 12px); display: flex; padding: 16px 0 15px 7px; align-items: stretch; }
.namebox { width: 152px; background: #fff; border: 1px solid #c8c8c8; display: flex; align-items: center; justify-content: space-between; padding: 0 11px 0 6px; font-size: 18px; color: #333; }
.tri { width: 8px; height: 5px; }
.fdots { width: 45px; display: flex; flex-direction: column; align-items: center; justify-content: center; gap: 3px; }
.fdots i, .vdots i { display: block; width: 3px; height: 3px; background: #aaa; }
.fbtns { width: 164px; background: #fff; border: 1px solid #c8c8c8; display: grid; grid-template-columns: 54px 56px 52px; place-items: center; }
.fico { width: 17px; height: 16px; }
.fx { font: italic 700 20px "Liberation Serif", serif; color: #777; }
.finput { flex: 1; margin-left: 4px; background: #fdfdfd; border: 1px solid #c8c8c8; border-right: 0; }

/* sheet */
.sheet { height: 649px; flex: none; background: #fff; overflow: hidden; display: flex; flex-direction: column; }
.colhead { height: 17px; flex: none; background: #e6e6e6; border-bottom: 1px solid #9f9f9f; display: grid; grid-template-columns: 23px 19px 64px 69px 64px 64px 64px 64px 64px 64px 64px 64px 37px 75px 75px 75px 75px 75px 75px 64px 64px 64px 64px 64px 64px 64px 64px 64px 64px 64px; }
.corner { display: flex; justify-content: flex-end; align-items: flex-end; padding: 0 5px 2px 0; }
.corner-tri { width: 8px; height: 9px; }
.ch { font-size: 10px; line-height: 16px; text-align: center; color: #333; border-right: 1px solid #c4c4c4; }
.ch-on { background: #d2d2d2; color: #217346; border-bottom: 2px solid #217346; height: 17px; }
.sheet-body { flex: 1; display: flex; min-height: 0; }
.rowhead { width: 23px; flex: none; background: #e6e6e6; border-right: 1px solid #9f9f9f; display: flex; flex-direction: column; }
.rh { height: 16px; flex: none; font-size: 11px; line-height: 15px; text-align: center; color: #333; border-bottom: 1px solid #b8b8b8; overflow: hidden; }
.rh-57 { height: 4px; }
.rh-58 { height: 75px; display: flex; align-items: flex-end; justify-content: center; }
.rh-59 { height: 9px; line-height: 1px; }
.rh-60 { height: 31px; display: flex; align-items: flex-end; justify-content: center; }
.rh-14 { height: 14px; line-height: 13px; }
.rh-64 { height: 10px; line-height: 1px; }
.cells { flex: 1; display: grid; font-family: Lato, "Liberation Sans", sans-serif; font-size: 11px; color: #222;
  grid-template-columns: [A] 19px [B] 64px [C] 69px [D] 64px [E] 64px [F] 64px [G] 64px [H] 64px [I] 64px [J] 64px [K] 64px [L] 37px [M] 75px [N] 75px [O] 75px [P] 75px [Q] 75px [R] 75px [S] 1fr;
  grid-template-rows: [r49] 16px [r50] 16px [r51] 16px [r52] 16px [r53] 16px [r54] 16px [r55] 16px [r56] 16px [r57] 4px [r58] 75px [r59] 9px [r60] 31px [r61] 14px [r62] 16px [r63] 14px [r64] 10px [r65] 16px [r66] 16px [r67] 16px [r68] 16px [r69] 16px [r70] 16px [r71] 16px [r72] 16px [r73] 16px [r74] 16px [r75] 16px [r76] 16px [r77] 16px; }
.cB { grid-column: B; } .cC { grid-column: C; } .cD { grid-column: D; } .cE { grid-column: E; } .cF { grid-column: F; } .cH { grid-column: H; } .cJ { grid-column: J; }
.cL { grid-column: L; } .cM { grid-column: M; } .cN { grid-column: N; } .cO { grid-column: O; } .cP { grid-column: P; } .cQ { grid-column: Q; } .cR { grid-column: R; }
.cFG { grid-column: F / H; } .cHI { grid-column: H / J; } .cJK { grid-column: J / L; }
.r49 { grid-row: r49; } .r50 { grid-row: r50; } .r51 { grid-row: r51; } .r54 { grid-row: r54; } .r56 { grid-row: r56; } .r62 { grid-row: r62; } .r63 { grid-row: r63; }
.r66 { grid-row: r66; } .r67 { grid-row: r67; } .r68 { grid-row: r68; } .r69 { grid-row: r69; } .r70 { grid-row: r70; } .r71 { grid-row: r71; } .r76 { grid-row: r76; }
.c { position: relative; background: #fff; border-right: 1px solid #000; border-bottom: 1px solid #000; text-align: right; padding: 0 2px; line-height: 15px; white-space: nowrap; overflow: hidden; }
.grey { background: #d9d9d9; }
.lb { border-left: 1px solid #000; }
.al { text-align: left; }
.ctr { text-align: center; }
.blk { background: #000; }
.money { display: flex; justify-content: space-between; padding: 0 5px 0 6px; }
.flag::before { content: ""; position: absolute; left: 0; top: 0; border-top: 5px solid #0b7a0b; border-right: 5px solid transparent; }
.probbox { grid-column: B / O; grid-row: r54 / r65; margin: -1px 0 0 -1px; background: #bfbfbf; border: 1px solid #000; }
.t { white-space: nowrap; padding-left: 2px; line-height: 16px; align-self: start; z-index: 1; color: #222; }
.t-bold { font-weight: 700; font-size: 11px; letter-spacing: .03px; }
.t-u { text-decoration: underline; }
.t-w { color: #fff; }
.para { font-family: "Open Sans", sans-serif; font-size: 11px; letter-spacing: .39px; }
.p1 { grid-column: B; grid-row: r57 / r59; margin-top: 1px; }
.p2 { grid-column: B; grid-row: r60 / r62; margin-top: -1px; }
.gapmark { grid-column: N; grid-row: r63; justify-self: end; width: 3px; margin-right: -2px; background: #fff; z-index: 1; }
.t4head { grid-column: B / L; grid-row: r66 / r69; margin: 0 0 0 -1px; background: #000; }

/* sheet tabs */
.sheetbar { height: 35px; flex: none; background: #e6e6e6; border-top: 2px solid #a6a6a6; border-bottom: 1px solid #bdbdbd; display: flex; align-items: flex-start; }
.sheetnav { width: 118px; display: flex; gap: 29px; padding: 9px 0 0 29px; }
.navtri { width: 6px; height: 12px; }
.sheettab { width: 150px; height: 31px; margin-top: -2px; background: #fff; border: 1px solid #a6a6a6; border-bottom: 3px solid #217346; color: #217346; font-weight: 700; font-size: 19.200px; text-align: center; line-height: 28px; letter-spacing: .1px; flex: none; }
.addsheet { width: 22px; height: 22px; margin: 4px 0 0 39px; }
.vdots { flex: 1; display: flex; flex-direction: column; align-items: flex-end; gap: 3px; padding: 7px 18px 0 0; }
.hscroll { width: 856px; height: 24px; margin-top: 3px; background: #fff; border: 1px solid #b0b0b0; flex: none; }
.hs-btn { width: 25px; height: 22px; border-right: 2px solid #b0b0b0; display: flex; align-items: center; justify-content: center; }
.hs-tri { width: 6px; height: 12px; }
.hs-end { width: 27px; height: 32px; background: #dcdcdc; flex: none; }

/* status */
.status { height: 32px; flex: none; background: #f3f2f1; display: flex; align-items: stretch; padding-left: 10px; }
.ready { font-size: 15px; line-height: 32px; color: #444; flex: 1; }
.views { display: grid; grid-template-columns: 60.500px 60.500px 60.500px; width: 187px; }
.view { display: flex; align-items: center; justify-content: center; }
.view-on { background: #d0cfce; }
.view-ico { width: 21px; height: 21px; }
.zoom { width: 202px; display: flex; align-items: center; gap: 8px; padding-right: 12px; }
.zoom-btn { font-size: 18px; line-height: 20px; color: #666; width: 14px; text-align: center; }
.zoom-track { position: relative; flex: 1; height: 2px; background: #aaa; }
.zoom-thumb { position: absolute; left: 31px; top: -8px; width: 7px; height: 18px; background: #777; }
.zoom-tick { position: absolute; left: 73px; top: -4px; width: 2px; height: 10px; background: #aaa; }

/* taskbar */
.taskbar { height: 40px; flex: none; overflow: hidden; background: linear-gradient(90deg, #cfe6dc, #cbe8e6 40%, #d2e6ea 70%, #dfeae4); display: flex; align-items: flex-start; }
.tb-start { width: 73px; flex: none; padding: 18px 0 0 24px; }
.win { width: 24px; height: 24px; }
.tb-search { width: 513px; height: 50px; flex: none; background: #fff; border: 2px solid #ccc; border-bottom: 0; display: flex; align-items: flex-start; padding: 15px 0 0 17px; gap: 17px; font-size: 21.500px; color: #222; line-height: 30px; }
.tb-mag { width: 23px; height: 23px; flex: none; }
.tb-item { display: flex; justify-content: center; flex: none; height: 40px; padding-top: 13px; }
.w-cort { width: 76px; padding-top: 18px; }
.w-task { width: 66px; padding-top: 18px; }
.w-mail { width: 88px; }
.w-chrome { width: 62px; }
.w-spot { width: 88px; }
.w-folder { width: 62px; padding-top: 17px; }
.w-word { width: 84px; }
.w-excel { width: 73px; background: #ebf4f4; }
.cortana { width: 24px; height: 24px; border: 3px solid #000; border-radius: 50%; display: block; }
.tb-task { width: 22px; height: 30px; }
.tb-ico { width: 36px; height: 36px; }
.tb-32 { width: 32px; height: 32px; }
.tb-fill { flex: 1; }
.battery { width: 73px; height: 40px; margin-top: 15px; background: #000; border: 3px solid #fff; display: flex; flex: none; }
.batt-green { width: 48px; background: #149c4a; color: #fff; font-size: 21px; line-height: 30px; text-align: center; white-space: nowrap; padding-left: 13px; }
.batt-black { flex: 1; }
.plug { width: 14px; height: 24px; margin: 18px 0 0 12px; }
.sun { width: 30px; height: 30px; margin: 16px 0 0 49px; }
.tb-temp { font-size: 20px; line-height: 30px; color: #111; margin: 18px 0 0 15px; width: 72.500px; flex: none; white-space: nowrap; }
.tb-chev { width: 18px; height: 10px; margin-top: 25px; }
.tb-vol { width: 24px; height: 22px; margin: 17px 0 0 26.500px; }
.tb-pen { width: 22px; height: 24px; margin: 18px 0 0 31px; }
.clock { width: 100px; margin: 4px 0 0 21.500px; font-size: 16px; line-height: 26px; color: #111; display: flex; flex-direction: column; align-items: center; flex: none; }
.tb-notif { width: 8px; height: 30px; margin: 18px 0 0 17.500px; background: #000; flex: none; }
```
